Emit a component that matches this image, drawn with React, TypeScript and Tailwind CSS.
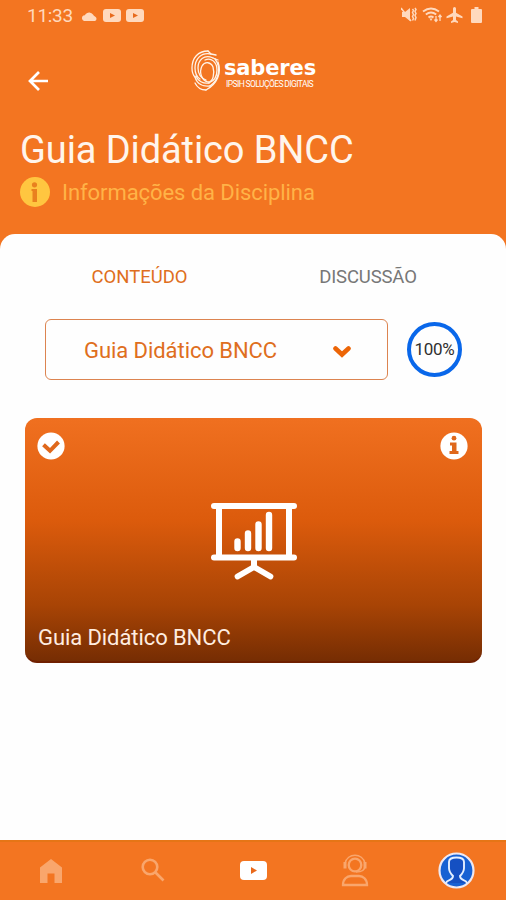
import React from "react";

const MUTED = "#f9a66c";

function StatusBar() {
  return (
    <div className="flex h-8 items-center pl-[27px] pr-[24px] text-[#ffd9bd]">
      <span className="w-[54px] text-[19px] leading-8 tracking-[-0.3px]">11:33</span>
      <svg className="-mt-[1px] h-[10px] w-[17px]" viewBox="0 0 17 10" fill="currentColor">
        <path d="M3 10a3 3 0 0 1-.6-5.400Q4.200 4.500 4.700 3A4.500 4.500 0 0 1 12 3.600Q12.800 5.200 14 5.400A2.500 2.500 0 0 1 14 10Z" />
      </svg>
      <StatusVideo className="ml-[5px]" />
      <StatusVideo className="ml-[5px]" />
      <span className="flex-1" />
      <svg className="-mt-[2px] h-4 w-4" viewBox="0 0 16 16" fill="currentColor">
        <path d="M1 5h3l5-4v13L4 10H1Z" />
        <path d="M0 1l10 13" stroke="currentColor" strokeWidth="1.500" />
        <path d="M11.500 2l1 1.500-1 2 1 2-1 2 1 2-1 2M14 1l1 1.500-1 2 1 2-1 2 1 2-1 3" fill="none" stroke="currentColor" strokeWidth="1.500" />
      </svg>
      <svg className="-mt-[2px] ml-[5px] h-4 w-5" viewBox="0 0 20 16" fill="none" stroke="currentColor" strokeWidth="1.900">
        <path d="M1 4.500Q9 -1.500 17 4.500M3.800 7.500Q9 3.500 14.200 7.500M6.500 10.500Q9 8.500 11.500 10.500" />
        <path d="M7.500 11.500h3L9 14Z" fill="currentColor" stroke="none" />
        <path d="M14 9v6M12.500 12.500L14 14.500l1.500-2M18 14V8M16.500 10L18 8l1.500 2" strokeWidth="1.300" />
      </svg>
      <svg className="-mt-[2px] ml-[4px] h-4 w-[17px]" viewBox="0 0 17 16" fill="currentColor">
        <path d="M7 1.500a1.500 1.500 0 0 1 3 0V5.800L16.500 9.500v1.800L10 9.600v3.500l2 1.300V16L8.500 15 5 16v-1.600l2-1.300V9.600L.5 11.300V9.500L7 5.800Z" />
      </svg>
      <svg className="-mt-[2px] ml-[8px] h-4 w-[11px]" viewBox="0 0 11 16" fill="currentColor">
        <path d="M3.500 0h4v2H10q1 0 1 1v12q0 1-1 1H1q-1 0-1-1V3q0-1 1-1h2.500Z" />
      </svg>
    </div>
  );
}

function StatusVideo({ className }: { className: string }) {
  return (
    <svg className={`-mt-[1px] h-[13px] w-[18px] ${className}`} viewBox="0 0 18 13">
      <rect width="18" height="13" rx="3" fill="#ffd9bd" />
      <path d="M7 4l5 2.500L7 9Z" fill="#e86a1c" />
    </svg>
  );
}

function Logo() {
  return (
    <div className="flex h-[42px] w-[130px] items-start">
      <svg className="h-[42px] w-[31px] shrink-0" viewBox="0 0 31 42" fill="none" stroke="#fff3e8" strokeWidth="1.300" strokeLinecap="round">
        <path d="M17 1C7 1 1 8 1 18c0 4 1 7 3 9" />
        <path d="M20 4C10 2 4 9 4 18c0 5 2 9 5 11" />
        <path d="M22 8C13 4 7 10 7 18c0 6 3 10 8 12" />
        <path d="M17 1l3 3M20 4l5 1M22 8l5 2" />
        <path d="M14 10c6-3 12 2 12 10 0 6-3 11-8 13" />
        <path d="M24 9c6 8 5 20-5 27" />
        <path d="M27 12c4 11-1 22-12 28" />
        <path d="M18 33c-6 1-11-2-13-7M19 36c-7 1-13-2-15-9M15 40c-5 0-9-3-11-7" />
        <path d="M22 17c-2-5-8-6-11-1-3 6-1 14 6 16 5 0 7-8 5-15" />
      </svg>
      <div className="ml-[2px] flex flex-col text-white">
        <span className="mt-[6px] h-[21px] whitespace-nowrap font-['DejaVu_Sans'] text-[21px] font-bold leading-[25px] tracking-[-0.15px]">saberes</span>
        <span className="mt-[2px] whitespace-nowrap pl-[2px] text-[8.500px] leading-[10px] tracking-[-0.6px]">IPSIH SOLUÇÕES DIGITAIS</span>
      </div>
    </div>
  );
}

function Header() {
  return (
    <header className="h-[234px]">
      <StatusBar />
      <div className="flex h-[97px] items-start">
        <svg className="ml-[28px] mt-[38px] h-[22px] w-[21px]" viewBox="0 0 21 22" fill="none" stroke="white" strokeWidth="2.700">
          <path d="M20 11H2M11 2L2 11l9 9" />
        </svg>
        <div className="ml-[142px] mt-[18px]">
          <Logo />
        </div>
      </div>
      <h1 className="ml-[20px] whitespace-nowrap text-[38px] leading-[42px] tracking-[-0.1px] text-[#fff5ec]">Guia Didático BNCC</h1>
      <div className="ml-[20px] mt-[5px] flex h-[32px] items-center">
        <svg className="h-[30px] w-[30px]" viewBox="0 0 30 30">
          <circle cx="15" cy="15" r="15" fill="#ffc640" />
          <circle cx="14.500" cy="7.800" r="2.600" fill="#e9811f" />
          <path d="M11.500 12h5.500v13h-4.500V14h-1Z" fill="#e9811f" />
        </svg>
        <span className="ml-[12px] mt-[1px] text-[22px] leading-8 tracking-[-0.07px] text-[#ffb347]">Informações da Disciplina</span>
      </div>
    </header>
  );
}

function Presentation() {
  return (
    <svg className="h-[78px] w-[88px]" viewBox="0 0 88 78" fill="none" stroke="white" strokeLinecap="round">
      <path d="M4 4h80M4 55.500h80" strokeWidth="6" />
      <path d="M9 5v50M79 5v50" strokeWidth="6" strokeLinecap="butt" />
      <path d="M27.500 39.500v6.500M38 31.500V46M48.500 22.500V46M59 13v33" strokeWidth="6.400" />
      <path d="M44 57v8" strokeWidth="6" />
      <path d="M27.500 74.500L44 65 60.500 74.500" strokeWidth="5.700" strokeLinejoin="round" />
    </svg>
  );
}

function Card() {
  return (
    <article className="ml-[25px] mt-[38px] flex h-[245px] w-[457px] flex-col overflow-hidden rounded-[12px] border-b-2 border-[#702000] bg-[linear-gradient(180deg,#f07020_0%,#dc5b0c_42%,#a84405_77%,#762d03_100%)]">
      <div className="flex h-[84px] justify-between pl-[12px] pr-[14px] pt-[14px]">
        <svg className="h-7 w-7" viewBox="0 0 28 28">
          <circle cx="14" cy="14" r="13.600" fill="white" />
          <path d="M6.500 12.800l6.500 6L21.500 10" fill="none" stroke="#df681c" strokeWidth="4" />
        </svg>
        <svg className="h-7 w-7" viewBox="0 0 28 28">
          <circle cx="14" cy="14" r="13.600" fill="white" />
          <circle cx="14" cy="6.200" r="2.400" fill="#df681c" />
          <path d="M10 10.500h6.500v8.500H18.500v3H9.500v-3H12v-5.500h-2Z" fill="#df681c" />
        </svg>
      </div>
      <div className="flex justify-center">
        <Presentation />
      </div>
      <p className="ml-[13px] mt-[42px] text-[22px] leading-8 tracking-[-0.08px] text-[#ffede0]">Guia Didático BNCC</p>
    </article>
  );
}

function BottomNav() {
  return (
    <nav className="flex h-[60px] items-center border-t-2 border-[#e67516] bg-[#f37521]">
      <span className="flex w-[102px] justify-center">
        <svg className="h-6 w-[22px]" viewBox="0 0 22 24" fill={MUTED}>
          <path d="M11 0l11 8.500V24h-7.500V14.500h-7V24H0V8.500Z" />
        </svg>
      </span>
      <span className="flex w-[101px] justify-center">
        <svg className="-mt-[2px] h-[24px] w-6" viewBox="0 0 24 24" fill="none" stroke={MUTED} strokeWidth="2.600">
          <circle cx="9" cy="9" r="7.300" />
          <path d="M14.500 14.500l8 8" />
        </svg>
      </span>
      <span className="flex w-[101px] justify-center">
        <svg className="-mt-[1px] h-[19px] w-[27px]" viewBox="0 0 27 19">
          <rect width="27" height="19" rx="4" fill="white" />
          <path d="M11 6l6 3.500-6 3.500Z" fill="#e9691b" />
        </svg>
      </span>
      <span className="flex w-[102px] justify-center">
        <svg className="-mt-[2px] h-[33px] w-7" viewBox="0 0 28 33" fill="none" stroke={MUTED} strokeWidth="2.300">
          <circle cx="14" cy="11" r="6.300" />
          <path d="M4 9.500C6-1.500 22-1.500 24 9.500M15 18c6 0 9-2 9-6" strokeWidth="1.400" />
          <path d="M4 8v6.500M24 8v6.500" strokeWidth="3" />
          <path d="M2 31C2 25 6 22 10 22h8c4 0 8 3 8 9Z" />
        </svg>
      </span>
      <span className="flex w-[100px] justify-center">
        <svg className="-mt-[2px] h-[37px] w-[37px]" viewBox="0 0 37 37">
          <circle cx="18.500" cy="18.500" r="17" fill="#1761d3" stroke="#eee8f1" strokeWidth="2.200" />
          <path d="M8 31c1-4 7-2 7-7-3-3-4-5-4-8V10c0-3 3-4.500 7.500-4.500S26 7 26 10v6c0 3-1 5-4 8 0 5 6 3 7 7" fill="#1550c2" stroke="#e4efff" strokeWidth="1.900" />
        </svg>
      </span>
    </nav>
  );
}

export default function App() {
  return (
    <div className="flex h-[900px] w-[506px] flex-col overflow-hidden bg-[#f37521] font-[Roboto,sans-serif]">
      <Header />
      <main className="flex-1 rounded-t-[15px] bg-[#fefefe]">
        <div className="flex h-[85px] items-center pl-[25px] pt-[3px] text-[18.500px]">
          <span className="w-[229px] text-center text-[#df6e20]">CONTEÚDO</span>
          <span className="w-[228px] text-center tracking-[-0.15px] text-[#777777]">DISCUSSÃO</span>
        </div>
        <div className="flex items-center pl-[45px]">
          <div className="flex h-[61px] w-[343px] items-center rounded-[6px] border-[1.500px] border-[#dc8450] pl-[38px] text-[22px] text-[#df6e20]">
            <span className="mt-[1px] w-[249px] tracking-[-0.06px]">Guia Didático BNCC</span>
            <svg className="mt-[4px] h-3 w-[18px]" viewBox="0 0 18 12" fill="none" stroke="#ec6507" strokeWidth="4.600">
              <path d="M2.500 2.500l6.500 6 6.500-6" strokeLinecap="round" />
            </svg>
          </div>
          <div className="ml-[19px] flex h-[55px] w-[55px] items-center justify-center rounded-full border-[4px] border-[#0967ea] pt-[1px] text-[17px] tracking-[-0.3px] text-[#303030]">100%</div>
        </div>
        <Card />
      </main>
      <BottomNav />
    </div>
  );
}
